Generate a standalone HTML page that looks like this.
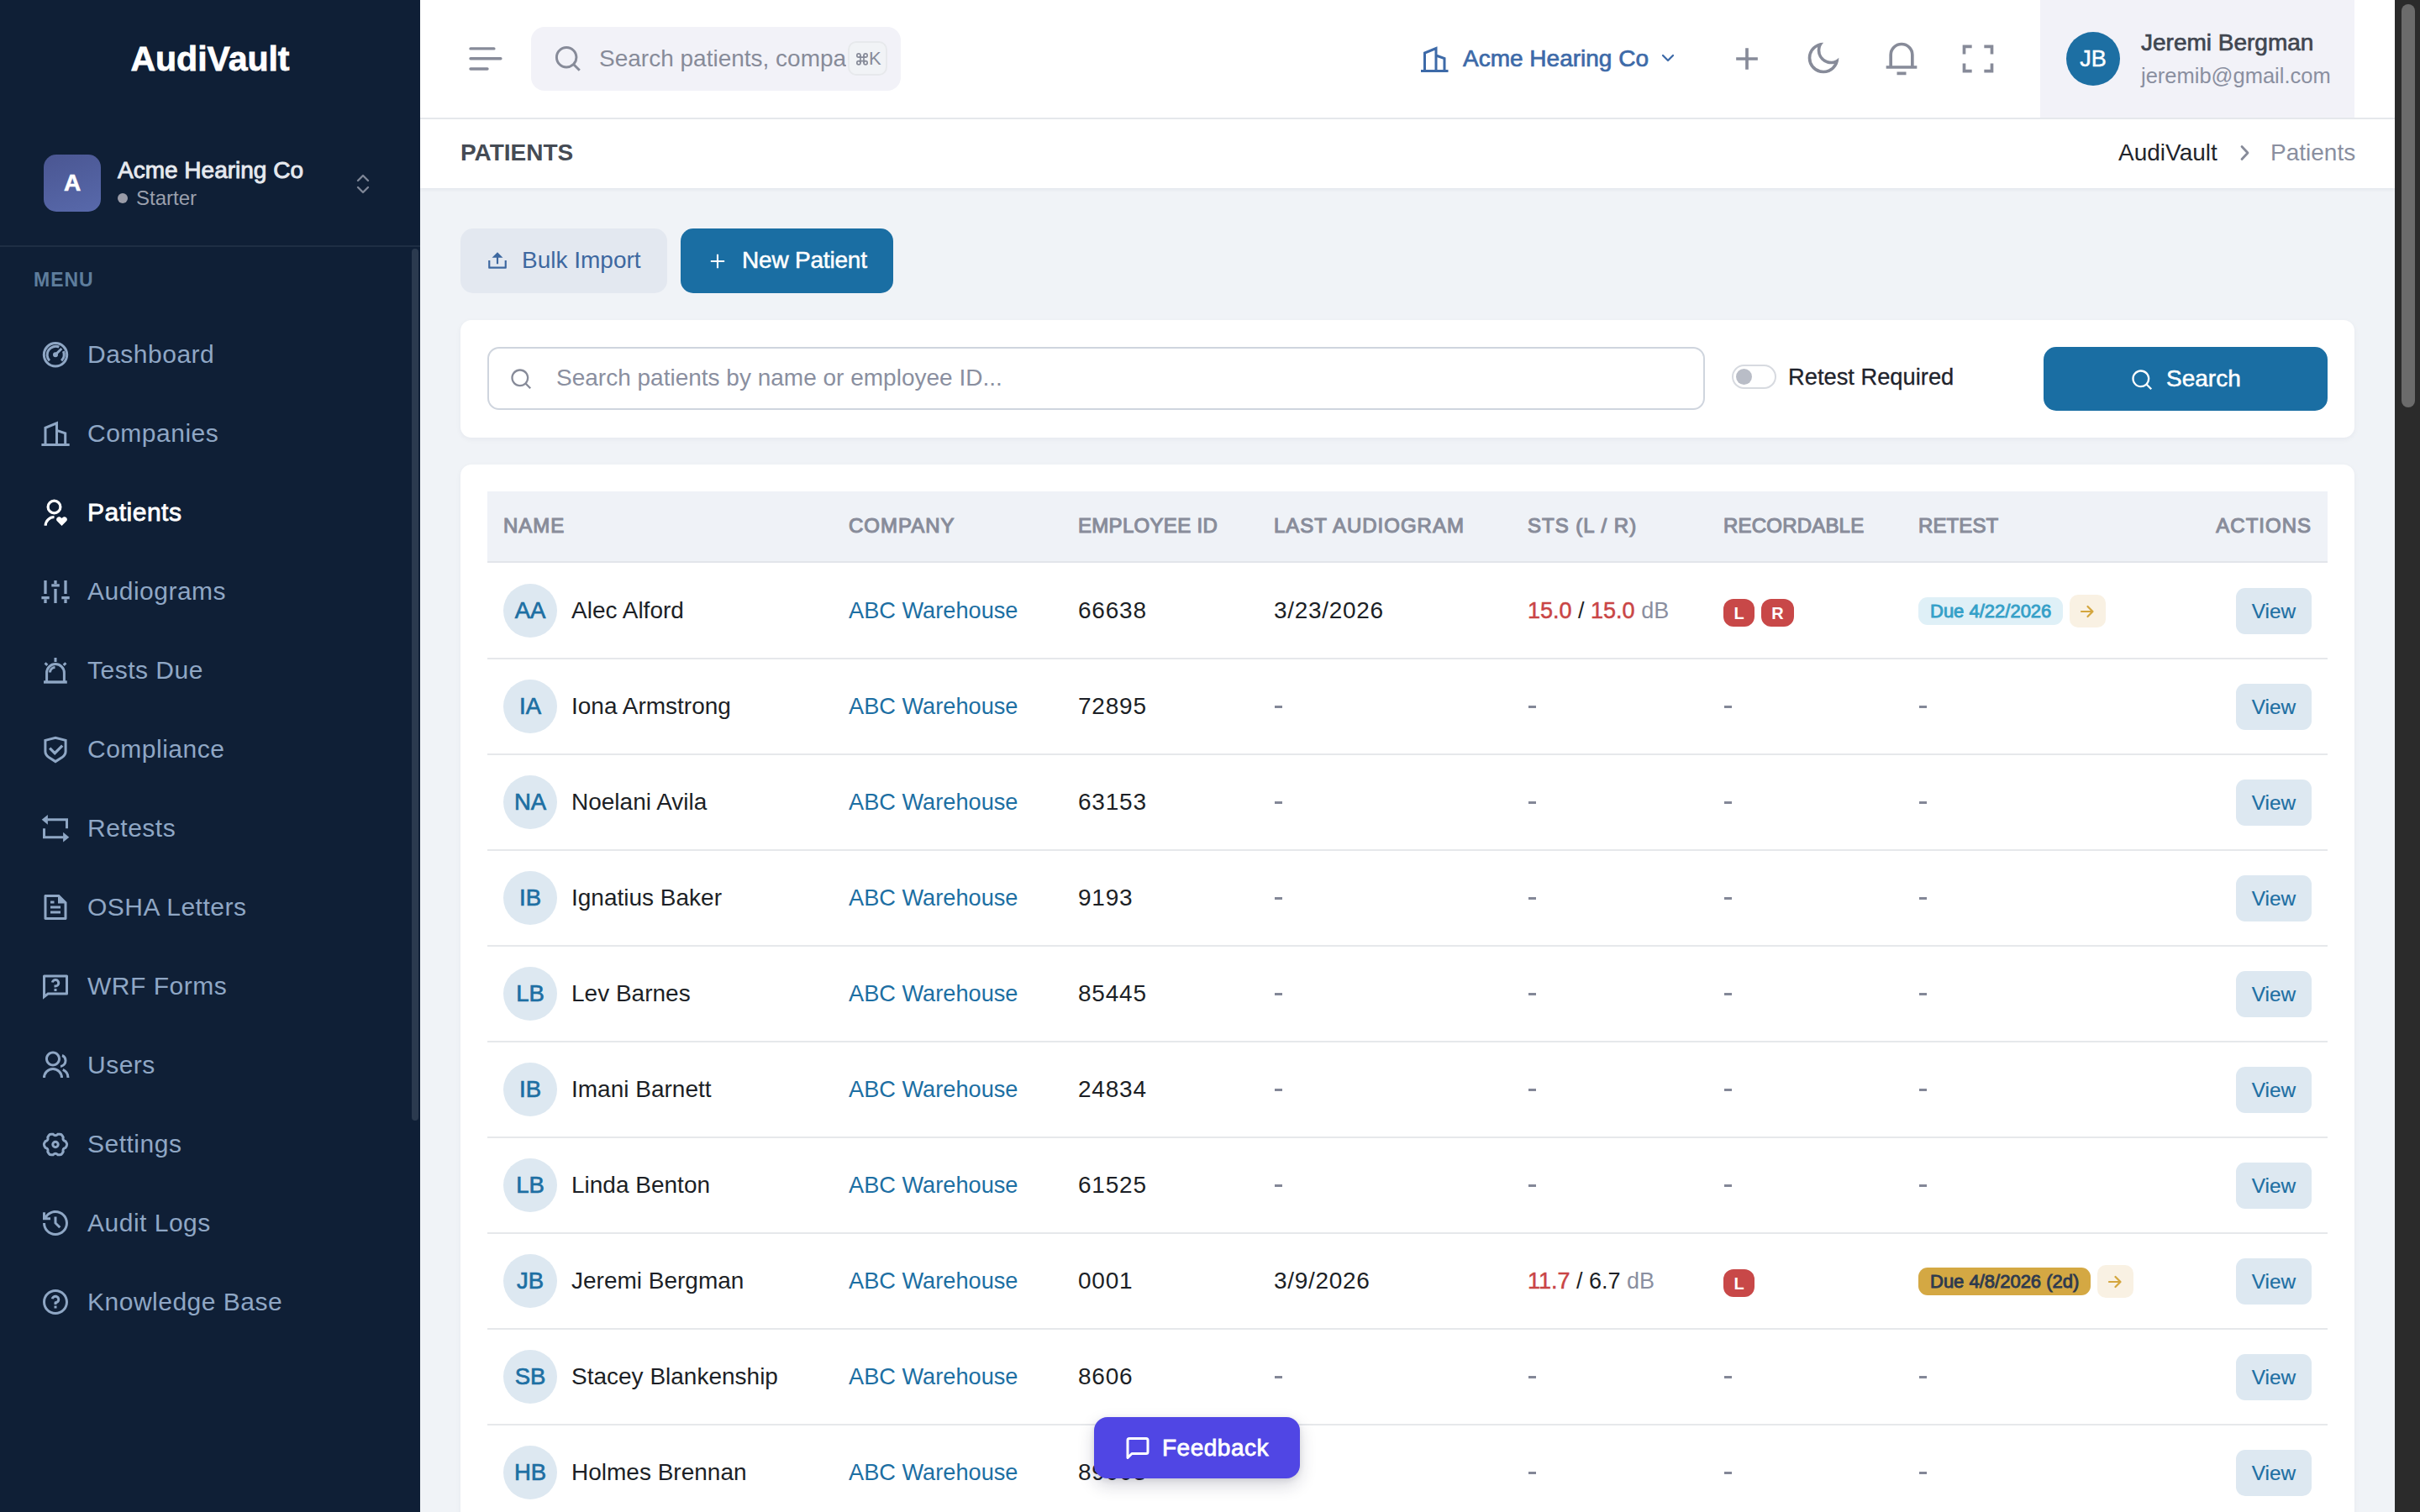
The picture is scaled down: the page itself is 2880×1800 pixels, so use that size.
<!DOCTYPE html>
<html><head><meta charset="utf-8">
<style>
*{box-sizing:border-box;margin:0;padding:0}
html,body{width:2880px;height:1800px;overflow:hidden;background:#f0f3f7;font-family:"Liberation Sans",sans-serif}
.a{position:absolute}
.t{position:absolute;white-space:nowrap}
svg{position:absolute;overflow:visible}
/* sidebar */
#sb{left:0;top:0;width:500px;height:1800px;background:#0f1f36}
.mi{position:absolute;left:0;width:480px;height:94px}
.mi span{position:absolute;left:104px;top:0;line-height:94px;font-size:30px;color:#8fa7c5;white-space:nowrap}
.mi svg{left:48px;top:31px;width:34px;height:34px}
.mi svg *{fill:none;stroke:#8fa7c5;stroke-width:2;stroke-linecap:round;stroke-linejoin:round}
.mi.act span{color:#ffffff}
.mi.act svg *{stroke:#ffffff}

.th{top:604px;line-height:44px;font-size:24px;font-weight:400;color:#888c9a;-webkit-text-stroke:1.1px #888c9a;letter-spacing:1px}
.sep{left:580px;width:2190px;height:2px;background:#e6e8eb}
.av{left:599px;width:64px;height:64px;border-radius:32px;background:#dde8f1;color:#1d6fa3;font-size:27.5px;font-weight:400;-webkit-text-stroke:0.7px #1d6fa3;line-height:64px;text-align:center}
.td{line-height:44px;font-size:28px;color:#1c1f26}
.num{letter-spacing:0.8px}
.lk{color:#1d6fa3;font-size:27.2px}
.dsh{width:9px;height:3px;background:#838797}
.rd{color:#c94545;-webkit-text-stroke:0.5px #c94545}
.gy{color:#8a8fa0}
.rb{height:33px;border-radius:12px;background:#c84848;color:#fff;font-size:20px;font-weight:700;line-height:35px;text-align:center}
.due{height:33px;border-radius:11px;font-size:22px;font-weight:400;-webkit-text-stroke:0.9px currentColor;line-height:33px;padding-left:14px;white-space:nowrap}
.arr{width:43px;height:39px;border-radius:10px;background:#f9f1e3}
.vw{left:2661px;width:90px;height:55px;border-radius:11px;background:#dde8f1;color:#1d6fa3;font-size:24.4px;line-height:55px;text-align:center;-webkit-text-stroke:0.2px #1d6fa3}
@media (max-width:1600px){html{zoom:0.5}}
</style></head><body>
<div id="sb" class="a">
  <div class="t" style="left:0;width:500px;text-align:center;top:45px;line-height:50px;font-size:41px;font-weight:700;color:#fff;-webkit-text-stroke:0.8px #fff">AudiVault</div>
  <div class="a" style="left:52px;top:184px;width:68px;height:68px;border-radius:15px;background:linear-gradient(160deg,#4a5692,#5869ab)"></div>
  <div class="t" style="left:52px;top:184px;width:68px;line-height:68px;text-align:center;font-size:28px;font-weight:700;color:#fff;-webkit-text-stroke:0.6px #fff">A</div>
  <div class="t" style="left:140px;top:186px;line-height:34px;font-size:28px;font-weight:400;color:#e6e9ef;-webkit-text-stroke:0.9px #e6e9ef">Acme Hearing Co</div>
  <div class="a" style="left:140px;top:230px;width:12px;height:12px;border-radius:6px;background:#9a9ca8"></div>
  <div class="t" style="left:162px;top:220px;line-height:32px;font-size:24px;color:#9ba0ad">Starter</div>
  <svg style="left:422px;top:206px;width:20px;height:26px" viewBox="0 0 20 26"><path d="M4 9 L10 3 L16 9 M4 17 L10 23 L16 17" fill="none" stroke="#7d8596" stroke-width="2.4" stroke-linecap="round" stroke-linejoin="round"/></svg>
  <div class="a" style="left:0;top:292px;width:500px;height:2px;background:#1e2e44"></div>
  <div class="a" style="left:490px;top:296px;width:8px;height:1038px;border-radius:4px;background:#2b3a4f"></div>
  <div class="t" style="left:40px;top:318px;line-height:30px;font-size:23px;font-weight:700;color:#5e7d9c;letter-spacing:1px">MENU</div>
  <svg style="left:48px;top:404px;width:36px;height:36px" viewBox="0 0 36 36" fill="none" stroke="#8fa7c5" stroke-linejoin="miter"><circle cx="18" cy="18.3" r="13.7" stroke-width="3"/><path d="M10.9 25.4 A10.1 10.1 0 0 1 22.3 9.2" stroke-width="3"/><path d="M27.4 14.2 A10.1 10.1 0 0 1 25.1 25.4" stroke-width="3"/><path d="M18 18.3 L25.3 11" stroke-width="3"/><circle cx="18" cy="18.3" r="3" fill="#8fa7c5" stroke="none"/></svg>
  <div class="t" style="left:104px;top:398px;line-height:48px;font-size:30px;letter-spacing:0.5px;color:#8fa7c5">Dashboard</div>
  <svg style="left:48px;top:498px;width:36px;height:36px" viewBox="0 0 36 36" fill="none" stroke="#8fa7c5" stroke-linejoin="miter"><path d="M1.4 31.5 H34.7" stroke-width="3"/><path d="M6 31.5 V11.3 L19.5 5.8 V31.5" stroke-width="3"/><path d="M19.5 14.3 L29.7 17.8 V31.5" stroke-width="3"/></svg>
  <div class="t" style="left:104px;top:492px;line-height:48px;font-size:30px;letter-spacing:0.5px;color:#8fa7c5">Companies</div>
  <svg style="left:48px;top:592px;width:36px;height:36px" viewBox="0 0 36 36" fill="none" stroke="#ffffff" stroke-linejoin="miter"><circle cx="16.5" cy="11.5" r="7.4" stroke-width="3.2"/><path d="M6.2 33.8 A10.3 10.3 0 0 1 16.5 23.5" stroke-width="3.2"/><path d="M25.5 34.1 L20.1 28.6 C18.6 27.1 18.8 24.9 20.3 23.9 C21.8 22.8 23.9 23.2 25.5 24.9 C27.1 23.2 29.2 22.8 30.7 23.9 C32.2 24.9 32.4 27.1 30.9 28.6 Z" fill="#ffffff" stroke="none"/></svg>
  <div class="t" style="left:104px;top:586px;line-height:48px;font-size:30px;letter-spacing:0.5px;color:#ffffff;-webkit-text-stroke:0.8px #fff">Patients</div>
  <svg style="left:48px;top:686px;width:36px;height:36px" viewBox="0 0 36 36" fill="none" stroke="#8fa7c5" stroke-linejoin="miter"><path d="M6 5 V21 M1.4 25.7 H10.7 M6 27.4 V32 M18 5 V9 M13.3 10.8 H22.8 M18 15 V32 M30 5 V21 M25.3 25.7 H34.7 M30 27.4 V32" stroke-width="3.3"/></svg>
  <div class="t" style="left:104px;top:680px;line-height:48px;font-size:30px;letter-spacing:0.5px;color:#8fa7c5">Audiograms</div>
  <svg style="left:48px;top:780px;width:36px;height:36px" viewBox="0 0 36 36" fill="none" stroke="#8fa7c5" stroke-linejoin="miter"><path d="M18 3 V8 M5.6 9.2 L8.3 11.9 M30.4 9.2 L27.7 11.9" stroke-width="3"/><path d="M7.6 32 V21 A10.4 10.4 0 0 1 28.4 21 V32" stroke-width="3"/><path d="M4 32 H31.8" stroke-width="3.4"/><path d="M11.5 20.5 A6 6 0 0 1 17.5 14.5" stroke-width="3"/></svg>
  <div class="t" style="left:104px;top:774px;line-height:48px;font-size:30px;letter-spacing:0.5px;color:#8fa7c5">Tests Due</div>
  <svg style="left:48px;top:874px;width:36px;height:36px" viewBox="0 0 36 36" fill="none" stroke="#8fa7c5" stroke-linejoin="miter"><path d="M5.9 7.4 L18 4.4 L30.1 7.4 V20.5 C30.1 23.6 28.6 25.6 26 27.4 L18 32.6 L10 27.4 C7.4 25.6 5.9 23.6 5.9 20.5 Z" stroke-width="3"/><path d="M11.2 16.6 L17.2 22.6 L26.2 13.6" stroke-width="3.3"/></svg>
  <div class="t" style="left:104px;top:868px;line-height:48px;font-size:30px;letter-spacing:0.5px;color:#8fa7c5">Compliance</div>
  <svg style="left:48px;top:968px;width:36px;height:36px" viewBox="0 0 36 36" fill="none" stroke="#8fa7c5" stroke-linejoin="miter"><path d="M31.5 18.2 V7.8 H8.5" stroke-width="3"/><path d="M1.7 7.8 L8.9 1.9 V13.7 Z" fill="#8fa7c5" stroke="none"/><path d="M4.5 18.2 V28.7 H27.6" stroke-width="3"/><path d="M34.3 28.7 L27.1 22.8 V34.6 Z" fill="#8fa7c5" stroke="none"/></svg>
  <div class="t" style="left:104px;top:962px;line-height:48px;font-size:30px;letter-spacing:0.5px;color:#8fa7c5">Retests</div>
  <svg style="left:48px;top:1062px;width:36px;height:36px" viewBox="0 0 24 24" fill="none" stroke="#8fa7c5" stroke-linejoin="miter"><path d="M21 8V20.9932C21 21.5501 20.5552 22 20.0066 22H3.9934C3.44495 22 3 21.556 3 21.0082V2.9918C3 2.45531 3.4487 2 4.00221 2H14.9968L21 8ZM19 9H14V4H5V20H19V9ZM8 7H11V9H8V7ZM8 11H16V13H8V11ZM8 15H16V17H8V15Z" fill="#8fa7c5" stroke="none"/></svg>
  <div class="t" style="left:104px;top:1056px;line-height:48px;font-size:30px;letter-spacing:0.5px;color:#8fa7c5">OSHA Letters</div>
  <svg style="left:48px;top:1156px;width:36px;height:36px" viewBox="0 0 24 24" fill="none" stroke="#8fa7c5" stroke-linejoin="miter"><path d="M6.455 19L2 22.5V4a1 1 0 0 1 1-1h18a1 1 0 0 1 1 1v14a1 1 0 0 1-1 1H6.455zm-.692-2H20V5H4v13.385L5.763 17zM11 14h2v2h-2v-2zM8.567 8.813A3.501 3.501 0 1 1 12 13h-1v-2h1a1.5 1.5 0 1 0-1.471-1.794l-1.962-.393z" fill="#8fa7c5" stroke="none"/></svg>
  <div class="t" style="left:104px;top:1150px;line-height:48px;font-size:30px;letter-spacing:0.5px;color:#8fa7c5">WRF Forms</div>
  <svg style="left:48px;top:1250px;width:36px;height:36px" viewBox="0 0 24 24" fill="none" stroke="#8fa7c5" stroke-linejoin="miter"><path d="M2 22a8 8 0 1 1 16 0h-2a6 6 0 1 0-12 0H2zm8-9c-3.315 0-6-2.685-6-6s2.685-6 6-6 6 2.685 6 6-2.685 6-6 6zm0-2c2.21 0 4-1.79 4-4s-1.79-4-4-4-4 1.79-4 4 1.79 4 4 4zm8.284 3.703A8.002 8.002 0 0 1 23 22h-2a6.001 6.001 0 0 0-3.537-5.473l.82-1.824zm-.688-11.29A5.5 5.5 0 0 1 21 8.5a5.499 5.499 0 0 1-5 5.478v-2.013a3.5 3.5 0 0 0 1.041-6.609l.555-1.943z" fill="#8fa7c5" stroke="none"/></svg>
  <div class="t" style="left:104px;top:1244px;line-height:48px;font-size:30px;letter-spacing:0.5px;color:#8fa7c5">Users</div>
  <svg style="left:48px;top:1344px;width:36px;height:36px" viewBox="0 0 36 36" fill="none" stroke="#8fa7c5" stroke-linejoin="miter"><path d="M31.35 19.98 L30.07 22.19 Q26.05 23.15 27.23 27.11 L25.95 29.32 Q25.10 30.80 23.40 30.80 L20.84 30.80 Q18.00 27.80 15.16 30.80 L12.60 30.80 Q10.90 30.80 10.05 29.32 L8.77 27.11 Q9.95 23.15 5.93 22.19 L4.65 19.98 Q3.80 18.50 4.65 17.02 L5.93 14.81 Q9.95 13.85 8.77 9.89 L10.05 7.68 Q10.90 6.20 12.60 6.20 L15.16 6.20 Q18.00 9.20 20.84 6.20 L23.40 6.20 Q25.10 6.20 25.95 7.68 L27.23 9.89 Q26.05 13.85 30.07 14.81 L31.35 17.02 Q32.20 18.50 31.35 19.98Z" stroke-width="3"/><circle cx="18" cy="18.5" r="3.2" stroke-width="3"/></svg>
  <div class="t" style="left:104px;top:1338px;line-height:48px;font-size:30px;letter-spacing:0.5px;color:#8fa7c5">Settings</div>
  <svg style="left:48px;top:1438px;width:36px;height:36px" viewBox="0 0 24 24" fill="none" stroke="#8fa7c5" stroke-linejoin="miter"><path d="M12 2C17.5228 2 22 6.47715 22 12C22 17.5228 17.5228 22 12 22C6.47715 22 2 17.5228 2 12H4C4 16.4183 7.58172 20 12 20C16.4183 20 20 16.4183 20 12C20 7.58172 16.4183 4 12 4C9.25022 4 6.82447 5.38734 5.38451 7.50024L8 7.5V9.5H2V3.5H4L3.99989 5.99918C5.82434 3.57075 8.72873 2 12 2ZM13 7L12.9998 11.585L16.2426 14.8284L14.8284 16.2426L10.9998 12.413L11 7H13Z" fill="#8fa7c5" stroke="none"/></svg>
  <div class="t" style="left:104px;top:1432px;line-height:48px;font-size:30px;letter-spacing:0.5px;color:#8fa7c5">Audit Logs</div>
  <svg style="left:48px;top:1532px;width:36px;height:36px" viewBox="0 0 24 24" fill="none" stroke="#8fa7c5" stroke-linejoin="miter"><path d="M12 22C6.47715 22 2 17.5228 2 12C2 6.47715 6.47715 2 12 2C17.5228 2 22 6.47715 22 12C22 17.5228 17.5228 22 12 22ZM12 20C16.4183 20 20 16.4183 20 12C20 7.58172 16.4183 4 12 4C7.58172 4 4 7.58172 4 12C4 16.4183 7.58172 20 12 20ZM11 15H13V17H11V15ZM13 13.3551V14H11V12.5C11 11.9477 11.4477 11.5 12 11.5C12.8284 11.5 13.5 10.8284 13.5 10C13.5 9.17157 12.8284 8.5 12 8.5C11.2723 8.5 10.6656 9.01823 10.5288 9.70577L8.56731 9.31346C8.88637 7.70919 10.302 6.5 12 6.5C13.933 6.5 15.5 8.067 15.5 10C15.5 11.5855 14.4457 12.9248 13 13.3551Z" fill="#8fa7c5" stroke="none"/></svg>
  <div class="t" style="left:104px;top:1526px;line-height:48px;font-size:30px;letter-spacing:0.5px;color:#8fa7c5">Knowledge Base</div>
</div>
<div class="a" style="left:500px;top:0;width:2350px;height:140px;background:#fff"></div>
<div class="a" style="left:500px;top:140px;width:2350px;height:2px;background:#e6e8ec"></div>
<svg style="left:556px;top:54px;width:44px;height:32px" viewBox="0 0 44 32"><path d="M4 3.9 H31.9 M4 15.7 H39.9 M4 28 H24" stroke="#878b99" stroke-width="3.4" stroke-linecap="round" fill="none"/></svg>
<div class="a" style="left:632px;top:32px;width:440px;height:76px;border-radius:16px;background:#f2f2f8"></div>
<svg style="left:657.8px;top:52px;width:35.3px;height:35.3px" viewBox="0 0 24 24"><path d="M18.031 16.617l4.283 4.282-1.415 1.415-4.282-4.283A8.96 8.96 0 0 1 11 20c-4.968 0-9-4.032-9-9s4.032-9 9-9 9 4.032 9 9a8.96 8.96 0 0 1-1.969 5.617zm-2.006-.742A6.977 6.977 0 0 0 18 11c0-3.868-3.133-7-7-7-3.868 0-7 3.132-7 7 0 3.867 3.132 7 7 7a6.977 6.977 0 0 0 4.875-1.975l.15-.15z" fill="#878b99"/></svg>
<div class="t" style="left:713px;top:50px;width:294px;overflow:hidden;line-height:40px;font-size:28px;color:#878b99">Search patients, companies...</div>
<div class="a" style="left:1009px;top:49px;width:47px;height:41px;border-radius:10px;background:#f1f3f6;border:2px solid #e7e9ec"></div>
<svg style="left:1018.5px;top:63px;width:14px;height:15px" viewBox="0 0 14 15"><path d="M5 3 V12 M9 3 V12 M3 5.2 H11 M3 9.6 H11" stroke="#878b99" stroke-width="1.7" fill="none"/><circle cx="2.9" cy="3" r="2.1" stroke="#878b99" stroke-width="1.7" fill="none"/><circle cx="11.1" cy="3" r="2.1" stroke="#878b99" stroke-width="1.7" fill="none"/><circle cx="2.9" cy="11.8" r="2.1" stroke="#878b99" stroke-width="1.7" fill="none"/><circle cx="11.1" cy="11.8" r="2.1" stroke="#878b99" stroke-width="1.7" fill="none"/></svg>
<div class="t" style="left:1034px;top:55px;line-height:30px;font-size:22px;color:#878b99">K</div>
<svg style="left:1688px;top:52px;width:38px;height:36px" viewBox="0 0 38 36"><path d="M3 32.5 H35.5" stroke="#3d6aa8" stroke-width="3" fill="none"/><path d="M7.5 32.5 V11 L21 5.5 V32.5 M21 14 L31 17.5 V32.5" stroke="#3d6aa8" stroke-width="3" fill="none"/></svg>
<div class="t" style="left:1741px;top:49px;line-height:42px;font-size:28px;font-weight:400;color:#3d6aa8;-webkit-text-stroke:0.7px #3d6aa8">Acme Hearing Co</div>
<svg style="left:1974.5px;top:61px;width:20px;height:16px" viewBox="0 0 20 16"><path d="M4 5 L10 11 L16 5" stroke="#3d6aa8" stroke-width="2.3" fill="none" stroke-linecap="round" stroke-linejoin="round"/></svg>
<svg style="left:2056.5px;top:47.6px;width:44px;height:44px" viewBox="0 0 24 24"><path d="M11 11V5h2v6h6v2h-6v6h-2v-6H5v-2z" fill="#878b99"/></svg>
<svg style="left:2148.3px;top:47.3px;width:44px;height:44px" viewBox="0 0 24 24"><path d="M10 7a7 7 0 0 0 12 4.9v.1c0 5.523-4.477 10-10 10S2 17.523 2 12 6.477 2 12 2h.1A6.979 6.979 0 0 0 10 7zm-6 5a8 8 0 0 0 15.062 3.762A9 9 0 0 1 8.238 4.938 7.999 7.999 0 0 0 4 12z" fill="#878b99"/></svg>
<svg style="left:2240.5px;top:46.7px;width:44px;height:44px" viewBox="0 0 24 24"><path d="M20 17h2v2H2v-2h2v-7a8 8 0 1 1 16 0v7zm-2 0v-7a6 6 0 1 0-12 0v7h12zm-9 4h6v2H9v-2z" fill="#878b99"/></svg>
<svg style="left:2332.4px;top:47.5px;width:44px;height:44px" viewBox="0 0 24 24"><path d="M20 3h2v6h-2V5h-4V3h4zM4 3h4v2H4v4H2V3h2zm16 16v-4h2v6h-6v-2h4zM4 19h4v2H2v-6h2v4z" fill="#878b99"/></svg>
<div class="a" style="left:2428px;top:0;width:374px;height:140px;background:#f2f2f8"></div>
<div class="a" style="left:2459px;top:38px;width:64px;height:64px;border-radius:32px;background:#1d6fa3"></div>
<div class="t" style="left:2459px;top:38px;width:64px;line-height:64px;text-align:center;font-size:27px;font-weight:400;color:#fff;-webkit-text-stroke:0.5px #fff">JB</div>
<div class="t" style="left:2548px;top:32px;line-height:38px;font-size:28px;font-weight:400;color:#414650;-webkit-text-stroke:0.7px #414650">Jeremi Bergman</div>
<div class="t" style="left:2548px;top:72px;line-height:36px;font-size:25.5px;color:#8a8fa0">jeremib@gmail.com</div>
<div class="a" style="left:500px;top:142px;width:2350px;height:82px;background:#fff;box-shadow:0 2px 4px rgba(20,30,60,0.06)"></div>
<div class="t" style="left:548px;top:160px;line-height:44px;font-size:28px;font-weight:700;color:#454b54">PATIENTS</div>
<div class="t" style="left:2521px;top:160px;line-height:44px;font-size:28px;color:#22252c">AudiVault</div>
<svg style="left:2660px;top:170px;width:22px;height:24px" viewBox="0 0 22 24"><path d="M8 4.5 L15 12 L8 19.5" stroke="#878b99" stroke-width="2.8" fill="none" stroke-linecap="round" stroke-linejoin="round"/></svg>
<div class="t" style="left:2702px;top:160px;line-height:44px;font-size:28px;color:#8a8fa0">Patients</div>
<div class="a" style="left:2850px;top:0;width:30px;height:1800px;background:#2b2b2b"></div>
<div class="a" style="left:2858px;top:5px;width:16px;height:480px;border-radius:8px;background:#6b6b6b"></div>

<div class="a" style="left:548px;top:272px;width:246px;height:77px;border-radius:15px;background:#e3e8f0"></div>
<svg style="left:579.1px;top:296.9px;width:26px;height:26px" viewBox="0 0 24 24"><path d="M4 19H20V12H22V20C22 20.5523 21.5523 21 21 21H3C2.44772 21 2 20.5523 2 20V12H4V19ZM13 9V16H11V9H6L12 3L18 9H13Z" fill="#3e68a0"/></svg>
<div class="t" style="left:621px;top:289px;line-height:42px;font-size:28px;color:#3e68a0">Bulk Import</div>
<div class="a" style="left:810px;top:272px;width:253px;height:77px;border-radius:15px;background:#1a6ea3"></div>
<svg style="left:839.9px;top:297.1px;width:28px;height:28px" viewBox="0 0 24 24"><path d="M11.1 11.1V5h1.8v6.1H19v1.8h-6.1V19h-1.8v-6.1H5v-1.8z" fill="#fff"/></svg>
<div class="t" style="left:883px;top:289px;line-height:42px;font-size:28px;color:#fff;font-weight:400;-webkit-text-stroke:0.5px #fff;letter-spacing:-0.2px">New Patient</div>

<div class="a" style="left:548px;top:381px;width:2254px;height:140px;border-radius:13px;background:#fff;box-shadow:0 2px 6px rgba(30,40,70,0.05)"></div>
<div class="a" style="left:580px;top:413px;width:1449px;height:75px;border-radius:14px;border:2px solid #cfd5de;background:#fff"></div>
<svg style="left:605.6px;top:436.6px;width:28px;height:28px" viewBox="0 0 24 24"><path d="M18.031 16.617l4.283 4.282-1.415 1.415-4.282-4.283A8.96 8.96 0 0 1 11 20c-4.968 0-9-4.032-9-9s4.032-9 9-9 9 4.032 9 9a8.96 8.96 0 0 1-1.969 5.617zm-2.006-.742A6.977 6.977 0 0 0 18 11c0-3.868-3.133-7-7-7-3.868 0-7 3.132-7 7 0 3.867 3.132 7 7 7a6.977 6.977 0 0 0 4.875-1.975l.15-.15z" fill="#878b99"/></svg>
<div class="t" style="left:662px;top:430px;line-height:40px;font-size:28px;color:#8a8fa0">Search patients by name or employee ID...</div>
<div class="a" style="left:2061px;top:434px;width:53px;height:29px;border-radius:15px;border:2px solid #d7dae0;background:#fff"></div>
<div class="a" style="left:2066px;top:439px;width:19px;height:19px;border-radius:10px;background:#b9bdc7"></div>
<div class="t" style="left:2128px;top:428px;line-height:42px;font-size:27.3px;color:#1f232c;-webkit-text-stroke:0.3px #1f232c">Retest Required</div>
<div class="a" style="left:2432px;top:413px;width:338px;height:76px;border-radius:15px;background:#1a6ea3"></div>
<svg style="left:2534.6px;top:437.6px;width:28px;height:28px" viewBox="0 0 24 24"><path d="M18.031 16.617l4.283 4.282-1.415 1.415-4.282-4.283A8.96 8.96 0 0 1 11 20c-4.968 0-9-4.032-9-9s4.032-9 9-9 9 4.032 9 9a8.96 8.96 0 0 1-1.969 5.617zm-2.006-.742A6.977 6.977 0 0 0 18 11c0-3.868-3.133-7-7-7-3.868 0-7 3.132-7 7 0 3.867 3.132 7 7 7a6.977 6.977 0 0 0 4.875-1.975l.15-.15z" fill="#fff"/></svg>
<div class="t" style="left:2578px;top:430px;line-height:42px;font-size:28px;color:#fff;-webkit-text-stroke:0.5px #fff">Search</div>

<div class="a" style="left:548px;top:553px;width:2254px;height:1300px;border-radius:13px;background:#fff;box-shadow:0 2px 6px rgba(30,40,70,0.05)"></div>
<div class="a" style="left:580px;top:585px;width:2190px;height:85px;background:#eff2f7;border-bottom:2px solid #e2e5ea"></div>
<div class="t th" style="left:599px">NAME</div>
<div class="t th" style="left:1010px">COMPANY</div>
<div class="t th" style="left:1283px;letter-spacing:0.3px">EMPLOYEE ID</div>
<div class="t th" style="left:1516px">LAST AUDIOGRAM</div>
<div class="t th" style="left:1818px">STS (L / R)</div>
<div class="t th" style="left:2051px;letter-spacing:0.2px">RECORDABLE</div>
<div class="t th" style="left:2283px;letter-spacing:0.1px">RETEST</div>
<div class="t th" style="left:2551px;width:200px;text-align:right">ACTIONS</div>
<div class="a sep" style="top:783px"></div>
<div class="a av" style="top:695px">AA</div>
<div class="t td" style="left:680px;top:705px">Alec Alford</div>
<div class="t td lk" style="left:1010px;top:705px">ABC Warehouse</div>
<div class="t td num" style="left:1283px;top:705px">66638</div>
<div class="t td" style="left:1516px;top:705px;letter-spacing:0.7px">3/23/2026</div>
<div class="t td" style="left:1818px;top:705px;font-size:27px"><span class="rd">15.0</span> / <span class="rd">15.0</span> <span class="gy">dB</span></div>
<div class="a rb" style="left:2051px;top:713px;width:37px">L</div>
<div class="a rb" style="left:2096px;top:713px;width:39px">R</div>
<div class="a due" style="left:2283px;top:711px;width:172px;background:#dff0f7;color:#35a0c8">Due 4/22/2026</div>
<div class="a arr" style="left:2463px;top:708px"><svg style="left:12px;top:11px;width:18px;height:18px" viewBox="0 0 18 18"><path d="M2 9 H15 M9.5 3 L15.5 9 L9.5 15" stroke="#d4a63e" stroke-width="2.2" fill="none" stroke-linecap="round" stroke-linejoin="round"/></svg></div>
<div class="a vw" style="top:700px">View</div>
<div class="a sep" style="top:897px"></div>
<div class="a av" style="top:809px">IA</div>
<div class="t td" style="left:680px;top:819px">Iona Armstrong</div>
<div class="t td lk" style="left:1010px;top:819px">ABC Warehouse</div>
<div class="t td num" style="left:1283px;top:819px">72895</div>
<div class="a dsh" style="left:1517px;top:840px"></div>
<div class="a dsh" style="left:1819px;top:840px"></div>
<div class="a dsh" style="left:2052px;top:840px"></div>
<div class="a dsh" style="left:2284px;top:840px"></div>
<div class="a vw" style="top:814px">View</div>
<div class="a sep" style="top:1011px"></div>
<div class="a av" style="top:923px">NA</div>
<div class="t td" style="left:680px;top:933px">Noelani Avila</div>
<div class="t td lk" style="left:1010px;top:933px">ABC Warehouse</div>
<div class="t td num" style="left:1283px;top:933px">63153</div>
<div class="a dsh" style="left:1517px;top:954px"></div>
<div class="a dsh" style="left:1819px;top:954px"></div>
<div class="a dsh" style="left:2052px;top:954px"></div>
<div class="a dsh" style="left:2284px;top:954px"></div>
<div class="a vw" style="top:928px">View</div>
<div class="a sep" style="top:1125px"></div>
<div class="a av" style="top:1037px">IB</div>
<div class="t td" style="left:680px;top:1047px">Ignatius Baker</div>
<div class="t td lk" style="left:1010px;top:1047px">ABC Warehouse</div>
<div class="t td num" style="left:1283px;top:1047px">9193</div>
<div class="a dsh" style="left:1517px;top:1068px"></div>
<div class="a dsh" style="left:1819px;top:1068px"></div>
<div class="a dsh" style="left:2052px;top:1068px"></div>
<div class="a dsh" style="left:2284px;top:1068px"></div>
<div class="a vw" style="top:1042px">View</div>
<div class="a sep" style="top:1239px"></div>
<div class="a av" style="top:1151px">LB</div>
<div class="t td" style="left:680px;top:1161px">Lev Barnes</div>
<div class="t td lk" style="left:1010px;top:1161px">ABC Warehouse</div>
<div class="t td num" style="left:1283px;top:1161px">85445</div>
<div class="a dsh" style="left:1517px;top:1182px"></div>
<div class="a dsh" style="left:1819px;top:1182px"></div>
<div class="a dsh" style="left:2052px;top:1182px"></div>
<div class="a dsh" style="left:2284px;top:1182px"></div>
<div class="a vw" style="top:1156px">View</div>
<div class="a sep" style="top:1353px"></div>
<div class="a av" style="top:1265px">IB</div>
<div class="t td" style="left:680px;top:1275px">Imani Barnett</div>
<div class="t td lk" style="left:1010px;top:1275px">ABC Warehouse</div>
<div class="t td num" style="left:1283px;top:1275px">24834</div>
<div class="a dsh" style="left:1517px;top:1296px"></div>
<div class="a dsh" style="left:1819px;top:1296px"></div>
<div class="a dsh" style="left:2052px;top:1296px"></div>
<div class="a dsh" style="left:2284px;top:1296px"></div>
<div class="a vw" style="top:1270px">View</div>
<div class="a sep" style="top:1467px"></div>
<div class="a av" style="top:1379px">LB</div>
<div class="t td" style="left:680px;top:1389px">Linda Benton</div>
<div class="t td lk" style="left:1010px;top:1389px">ABC Warehouse</div>
<div class="t td num" style="left:1283px;top:1389px">61525</div>
<div class="a dsh" style="left:1517px;top:1410px"></div>
<div class="a dsh" style="left:1819px;top:1410px"></div>
<div class="a dsh" style="left:2052px;top:1410px"></div>
<div class="a dsh" style="left:2284px;top:1410px"></div>
<div class="a vw" style="top:1384px">View</div>
<div class="a sep" style="top:1581px"></div>
<div class="a av" style="top:1493px">JB</div>
<div class="t td" style="left:680px;top:1503px">Jeremi Bergman</div>
<div class="t td lk" style="left:1010px;top:1503px">ABC Warehouse</div>
<div class="t td num" style="left:1283px;top:1503px">0001</div>
<div class="t td" style="left:1516px;top:1503px;letter-spacing:0.7px">3/9/2026</div>
<div class="t td" style="left:1818px;top:1503px;font-size:27px"><span class="rd">11.7</span> / 6.7 <span class="gy">dB</span></div>
<div class="a rb" style="left:2051px;top:1511px;width:37px">L</div>
<div class="a due" style="left:2283px;top:1509px;width:205px;background:#d4a843;color:#2e3a4e">Due 4/8/2026 (2d)</div>
<div class="a arr" style="left:2496px;top:1506px"><svg style="left:12px;top:11px;width:18px;height:18px" viewBox="0 0 18 18"><path d="M2 9 H15 M9.5 3 L15.5 9 L9.5 15" stroke="#d4a63e" stroke-width="2.2" fill="none" stroke-linecap="round" stroke-linejoin="round"/></svg></div>
<div class="a vw" style="top:1498px">View</div>
<div class="a sep" style="top:1695px"></div>
<div class="a av" style="top:1607px">SB</div>
<div class="t td" style="left:680px;top:1617px">Stacey Blankenship</div>
<div class="t td lk" style="left:1010px;top:1617px">ABC Warehouse</div>
<div class="t td num" style="left:1283px;top:1617px">8606</div>
<div class="a dsh" style="left:1517px;top:1638px"></div>
<div class="a dsh" style="left:1819px;top:1638px"></div>
<div class="a dsh" style="left:2052px;top:1638px"></div>
<div class="a dsh" style="left:2284px;top:1638px"></div>
<div class="a vw" style="top:1612px">View</div>
<div class="a av" style="top:1721px">HB</div>
<div class="t td" style="left:680px;top:1731px">Holmes Brennan</div>
<div class="t td lk" style="left:1010px;top:1731px">ABC Warehouse</div>
<div class="t td num" style="left:1283px;top:1731px">89003</div>
<div class="a dsh" style="left:1517px;top:1752px"></div>
<div class="a dsh" style="left:1819px;top:1752px"></div>
<div class="a dsh" style="left:2052px;top:1752px"></div>
<div class="a dsh" style="left:2284px;top:1752px"></div>
<div class="a vw" style="top:1726px">View</div>
<div class="a" style="left:1302px;top:1687px;width:245px;height:73px;border-radius:16px;background:#5046e4;box-shadow:0 8px 20px rgba(30,30,60,0.18),0 2px 6px rgba(30,30,60,0.1)"></div>
<svg style="left:1336px;top:1706px;width:36px;height:36px" viewBox="0 0 36 36"><path d="M6 29.5 V8.5 Q6 6.5 8 6.5 H28 Q30 6.5 30 8.5 V22.5 Q30 24.5 28 24.5 H11 Z" stroke="#fff" stroke-width="3" fill="none" stroke-linejoin="round"/></svg>
<div class="t" style="left:1383px;top:1702px;line-height:44px;font-size:28px;font-weight:400;color:#fff;-webkit-text-stroke:0.8px #fff;letter-spacing:0.5px">Feedback</div>


</body></html>
